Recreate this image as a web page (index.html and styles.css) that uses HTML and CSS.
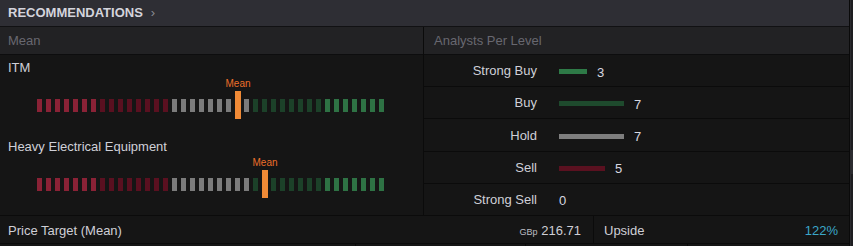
FILE: index.html
```html
<!DOCTYPE html>
<html lang="en">
<head>
  <meta charset="UTF-8" />
  <title>Recommendations</title>
  <link rel="stylesheet" href="styles.css">
</head>
<body>
  <div class="page">
    <div class="widget">
      <header class="widget-head">
        <h2>RECOMMENDATIONS</h2>
        <span class="chevron">&rsaquo;</span>
      </header>

      <div class="panels">
        <section class="col col-mean">
          <div class="sub-head">Mean</div>
          <div class="sectors">
            <div class="sector">
              <div class="sector-name">ITM</div>
              <div class="gauge" data-mean="22"></div>
            </div>
            <div class="sector">
              <div class="sector-name">Heavy Electrical Equipment</div>
              <div class="gauge" data-mean="25"></div>
            </div>
          </div>
        </section>

        <section class="col col-levels">
          <div class="sub-head">Analysts Per Level</div>
          <ul class="levels">
            <li><span class="lvl-name">Strong Buy</span><span class="bar bar-sbuy" style="width: 28px"></span><span class="lvl-count">3</span></li>
            <li><span class="lvl-name">Buy</span><span class="bar bar-buy" style="width: 65px"></span><span class="lvl-count">7</span></li>
            <li><span class="lvl-name">Hold</span><span class="bar bar-hold" style="width: 65px"></span><span class="lvl-count">7</span></li>
            <li><span class="lvl-name">Sell</span><span class="bar bar-sell" style="width: 46px"></span><span class="lvl-count">5</span></li>
            <li><span class="lvl-name">Strong Sell</span><span class="lvl-count no-bar">0</span></li>
          </ul>
        </section>
      </div>

      <div class="summary">
        <div class="cell cell-target">
          <span>Price Target (Mean)</span>
          <span class="val"><small>GBp</small> 216.71</span>
        </div>
        <div class="cell cell-upside">
          <span>Upside</span>
          <span class="val upside">122%</span>
        </div>
      </div>

      <div class="next-row">
        <div></div><div></div><div></div><div></div>
      </div>
    </div>
    <div class="scroll-strip"><div class="thumb"></div></div>
  </div>

  <script>
    // 39 segments: 7 strong sell, 8 sell, 9 hold, 8 buy, 7 strong buy
    const groups = [['seg-ssell', 7], ['seg-sell', 8], ['seg-hold', 9], ['seg-buy', 8], ['seg-sbuy', 7]];

    document.querySelectorAll('.gauge').forEach(gauge => {
      groups.forEach(([cls, n]) => {
        for (let i = 0; i < n; i++) {
          const seg = document.createElement('span');
          seg.className = 'seg ' + cls;
          gauge.appendChild(seg);
        }
      });

      const idx = Number(gauge.dataset.mean);
      const marker = document.createElement('div');
      marker.className = 'marker';
      marker.style.left = (idx * 9) + 'px';
      marker.innerHTML = '<span class="marker-label">Mean</span>';
      gauge.appendChild(marker);
    });
  </script>
</body>
</html>
```

FILE: styles.css
```css
* {
  box-sizing: border-box;
}

html, body {
  margin: 0;
  height: 100%;
  background: #151515;
  font-family: 'Liberation Sans', Arial, sans-serif;
  font-size: 13px;
  color: #cfcfd6;
  overflow: hidden;
}

.page {
  display: flex;
  height: 100%;
}

.widget {
  width: 850px;
  border-right: 1px solid #0a0a0a;
  display: flex;
  flex-direction: column;
}

.scroll-strip {
  flex: 1;
  background: #1d1d20;
  border-left: 1px solid #2a2a2e;
  padding-top: 150px;
}

.scroll-strip .thumb {
  height: 24px;
  background: #2c2c30;
}

.widget-head {
  height: 27px;
  background: #2e2e34;
  border-bottom: 1px solid #111113;
  display: flex;
  align-items: center;
  padding: 0 8px;
}

.widget-head h2 {
  margin: 0;
  font-size: 13px;
  font-weight: 700;
  color: #d4d4dc;
  line-height: 26px;
}

.chevron {
  margin-left: 8px;
  color: #8a8a92;
  font-size: 13px;
  line-height: 26px;
}

.panels {
  display: flex;
}

.col {
  display: flex;
  flex-direction: column;
}

.col-mean {
  width: 424px;
  border-right: 1px solid #0b0b0b;
}

.col-levels {
  flex: 1;
}

.sub-head {
  height: 28px;
  line-height: 27px;
  background: #222224;
  border-bottom: 1px solid #0d0d0e;
  color: #686870;
  padding-left: 8px;
}

.col-levels .sub-head {
  padding-left: 10px;
}

.sectors {
  height: 160px;
  padding: 5px 0 0 8px;
}

.sector {
  margin-bottom: 27px;
}

.sector-name {
  line-height: 16px;
  color: #cfd0d8;
}

.gauge {
  position: relative;
  display: flex;
  gap: 4px;
  margin: 23px 0 0 29px;
  height: 13px;
}

.seg {
  width: 5px;
  height: 13px;
}

.seg-ssell { background: #8a2236; }
.seg-sell  { background: #5a1020; }
.seg-hold  { background: #7b7b7b; }
.seg-buy   { background: #1c4129; }
.seg-sbuy  { background: #2e7244; }

.marker {
  position: absolute;
  top: -8px;
  width: 6px;
  height: 28px;
  background: #f08a36;
}

.marker-label {
  position: absolute;
  bottom: 30px;
  left: 50%;
  transform: translateX(-50%);
  font-size: 10px;
  line-height: 11px;
  color: #ec6f2a;
}

.levels {
  list-style: none;
  margin: 0;
  padding: 0;
  display: flex;
  flex-direction: column;
  height: 160px;
}

.levels li {
  flex: 1;
  display: flex;
  align-items: center;
  border-bottom: 1px solid #0b0b0b;
}

.levels li:last-child {
  border-bottom: none;
}

.lvl-name {
  width: 113px;
  text-align: right;
  margin-right: 22px;
  color: #cfd0d8;
}

.bar {
  height: 5px;
  margin-top: 2px;
}

.bar-sbuy { background: #2e7a47; }
.bar-buy  { background: #1e4a2d; }
.bar-hold { background: #7e7e7e; }
.bar-sell { background: #5a1120; }

.lvl-count {
  margin-left: 10px;
  padding-top: 3px;
  color: #d8d8e0;
}

.lvl-count.no-bar {
  margin-left: 0;
}

.summary {
  display: flex;
  height: 29px;
  border-top: 1px solid #0b0b0b;
  border-bottom: 1px solid #0b0b0b;
}

.cell {
  display: flex;
  align-items: center;
  justify-content: space-between;
  padding-top: 2px;
}

.cell-target {
  width: 594px;
  padding-left: 8px;
  padding-right: 12px;
  border-right: 1px solid #0b0b0b;
}

.cell-upside {
  flex: 1;
  padding-left: 10px;
  padding-right: 11px;
}

.val small {
  font-size: 9px;
  color: #bdbdc4;
}

.upside {
  color: #3ba7c9;
}

.next-row {
  display: flex;
  flex: 1;
}

.next-row div {
  border-right: 1px solid #0b0b0b;
}

.next-row div:nth-child(1) { width: 356px; }
.next-row div:nth-child(2) { width: 170px; }
.next-row div:nth-child(3) { width: 162px; }
.next-row div:nth-child(4) { flex: 1; border-right: none; }
```
